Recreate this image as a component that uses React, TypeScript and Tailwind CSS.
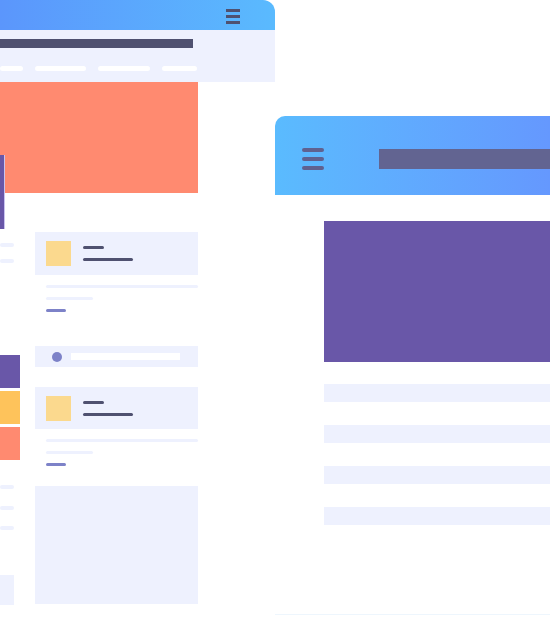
import React from 'react';

function Lines() {
  return (
    <div className="mt-[10px] flex flex-col px-[11px]">
      <div className="h-[3px] w-[152px] rounded-full bg-[#eef1fe]" />
      <div className="mt-[9px] h-[3px] w-[47px] rounded-full bg-[#eef1fe]" />
      <div className="mt-[9px] h-[3px] w-[20px] rounded-full bg-[#7d82c8]" />
    </div>
  );
}

function ItemCard({ height }: { height: string }) {
  return (
    <div className={`flex items-center gap-[12px] bg-[#eef1fe] px-[11px] ${height}`}>
      <div className="h-[25px] w-[25px] bg-[#fbd98e]" />
      <div className="flex flex-col gap-[9px]">
        <div className="h-[3px] w-[21px] rounded-full bg-[#4f5170]" />
        <div className="h-[3px] w-[50px] rounded-full bg-[#4f5170]" />
      </div>
    </div>
  );
}

function LeftWindow() {
  return (
    <div className="absolute left-0 top-0 flex w-[275px] flex-col">
      <div className="flex h-[30px] shrink-0 items-start justify-end rounded-tr-[12px] bg-gradient-to-r from-[#5b96fc] to-[#5abafe] pr-[35px] pt-[9px]">
        <div className="flex w-[14px] flex-col gap-[3px]">
          <div className="h-[3px] bg-[#4f5170]" />
          <div className="h-[3px] bg-[#4f5170]" />
          <div className="h-[3px] bg-[#4f5170]" />
        </div>
      </div>
      <div className="flex h-[52px] shrink-0 flex-col bg-[#eef1fe] pt-[9px]">
        <div className="h-[9px] w-[193px] bg-[#4f5170]" />
        <div className="mt-[18px] flex gap-[12px]">
          <div className="h-[5px] w-[23px] rounded-full bg-white" />
          <div className="h-[5px] w-[51px] rounded-full bg-white" />
          <div className="h-[5px] w-[52px] rounded-full bg-white" />
          <div className="h-[5px] w-[35px] rounded-full bg-white" />
        </div>
      </div>
      <div className="h-[111px] w-[198px] shrink-0 bg-[#ff8a70]" />
      <div className="flex gap-[15px]">
        <div className="relative z-10 -mt-[38px] flex w-[20px] flex-col">
          <div className="h-[74px] w-[4px] bg-[#6957a8] shadow-[1px_0_0_#c9c3f0]" />
          <div className="mt-[14px] h-[4px] w-[14px] rounded-full bg-[#eef1fe]" />
          <div className="mt-[12px] h-[4px] w-[14px] rounded-full bg-[#eef1fe]" />
          <div className="mt-[92px] flex flex-col gap-[3px]">
            <div className="h-[33px] w-[20px] bg-[#6957a8]" />
            <div className="h-[33px] w-[20px] bg-[#fec35b]" />
            <div className="h-[33px] w-[20px] bg-[#ff8a70]" />
          </div>
          <div className="mt-[25px] h-[4px] w-[14px] rounded-full bg-[#eef1fe]" />
          <div className="mt-[17px] h-[4px] w-[14px] rounded-full bg-[#eef1fe]" />
          <div className="mt-[16px] h-[4px] w-[14px] rounded-full bg-[#eef1fe]" />
          <div className="mt-[45px] h-[30px] w-[14px] bg-[#eef1fe]" />
        </div>
        <div className="flex w-[163px] flex-col pt-[39px]">
          <ItemCard height="h-[43px]" />
          <Lines />
          <div className="mt-[34px] flex h-[21px] items-center gap-[9px] bg-[#eef1fe] pl-[17px]">
            <div className="h-[10px] w-[10px] rounded-full bg-[#7d82c8]" />
            <div className="h-[7px] w-[109px] bg-white" />
          </div>
          <div className="mt-[20px]">
            <ItemCard height="h-[42px]" />
          </div>
          <Lines />
          <div className="mt-[20px] h-[118px] bg-[#eef1fe]" />
        </div>
      </div>
    </div>
  );
}

function RightWindow() {
  return (
    <div className="absolute left-[275px] top-[116px] flex h-[499px] w-[275px] flex-col border-b border-[#eef6fd] bg-white">
      <div className="flex h-[79px] shrink-0 items-start rounded-tl-[10px] bg-gradient-to-r from-[#5abbfe] to-[#6598fe] pl-[27px] pt-[32px]">
        <div className="flex w-[22px] flex-col gap-[5px]">
          <div className="h-[4px] rounded-full bg-[#5f6190]" />
          <div className="h-[4px] rounded-full bg-[#5f6190]" />
          <div className="h-[4px] rounded-full bg-[#5f6190]" />
        </div>
        <div className="ml-[55px] mt-[1px] h-[20px] flex-1 bg-[#626491]" />
      </div>
      <div className="flex flex-col pl-[49px] pt-[26px]">
        <div className="h-[141px] bg-[#6957a8]" />
        <div className="mt-[22px] flex flex-col gap-[23px]">
          <div className="h-[18px] bg-[#eef1fe]" />
          <div className="h-[18px] bg-[#eef1fe]" />
          <div className="h-[18px] bg-[#eef1fe]" />
          <div className="h-[18px] bg-[#eef1fe]" />
        </div>
      </div>
    </div>
  );
}

export default function App() {
  return (
    <div className="relative h-[641px] w-[550px] overflow-hidden bg-white">
      <LeftWindow />
      <RightWindow />
    </div>
  );
}
